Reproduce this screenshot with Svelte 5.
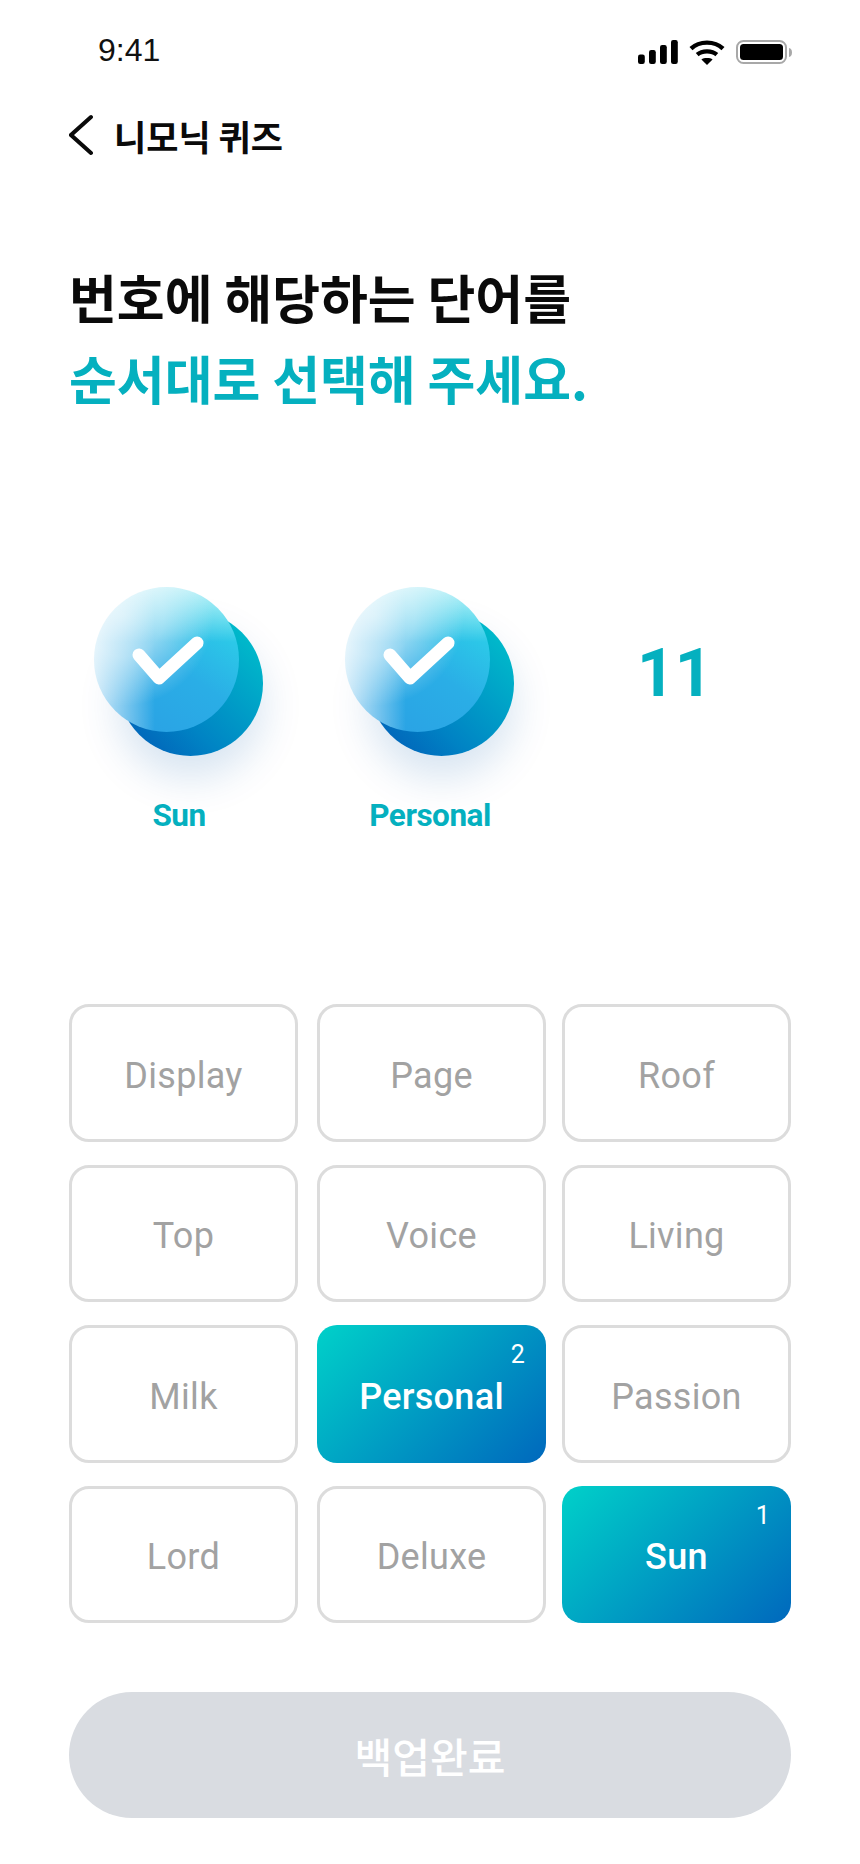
<script>
  const row = [
    { word: 'Sun' },
    { word: 'Personal' }
  ];
  const cards = [
    { w: 'Display' }, { w: 'Page' }, { w: 'Roof' },
    { w: 'Top' }, { w: 'Voice' }, { w: 'Living' },
    { w: 'Milk' }, { w: 'Personal', n: 2 }, { w: 'Passion' },
    { w: 'Lord' }, { w: 'Deluxe' }, { w: 'Sun', n: 1 }
  ];
</script>

<div class="page">
  <div class="status">
    <span class="time">9:41</span>
    <div class="icons">
      <svg width="40" height="24" viewBox="0 0 40 24">
        <rect x="0" y="14.6" width="6.8" height="9.4" rx="2.2" fill="#000"/>
        <rect x="11" y="10" width="6.8" height="14" rx="2.2" fill="#000"/>
        <rect x="22" y="5" width="6.8" height="19" rx="2.2" fill="#000"/>
        <rect x="33" y="0" width="6.8" height="24" rx="2.2" fill="#000"/>
      </svg>
      <svg width="36" height="26" viewBox="0 0 36 26">
        <path d="M2 9.6C10.5 1.6 25.5 1.6 34 9.6" fill="none" stroke="#000" stroke-width="4.4"/>
        <path d="M8.2 15.6C13 11.2 23 11.2 27.8 15.6" fill="none" stroke="#000" stroke-width="4.2"/>
        <path d="M12.4 20.4C15 18.6 21 18.6 23.6 20.4L18 26Z" fill="#000"/>
      </svg>
      <svg width="56" height="24" viewBox="0 0 56 24">
        <rect x="1" y="1" width="49" height="22" rx="6.5" fill="none" stroke="#a8a8a8" stroke-width="2"/>
        <rect x="4" y="4" width="43" height="16" rx="3.5" fill="#000"/>
        <path d="M53 8C55 8.6 56 10 56 12.5C56 15 55 16.4 53 17Z" fill="#a8a8a8"/>
      </svg>
    </div>
  </div>

  <header class="nav">
    <svg width="24" height="42" viewBox="0 0 24 42">
      <path d="M22 3L2 21L22 39" fill="none" stroke="#0a0a0a" stroke-width="4" stroke-linecap="round" stroke-linejoin="miter"/>
    </svg>
    <span>니모닉 퀴즈</span>
  </header>

  <h1>번호에 해당하는 단어를<br/><em>순서대로 선택해 주세요.</em></h1>

  <section class="slots">
    {#each row as s}
      <div class="slot">
        <div class="badge">
          <div class="back"></div>
          <div class="front"></div>
          <svg class="tick" width="76" height="56" viewBox="0 0 76 56">
            <path d="M9 22L29 45L67 10" fill="none" stroke="#fff" stroke-width="13" stroke-linecap="round" stroke-linejoin="round"/>
          </svg>
        </div>
        <span class="label">{s.word}</span>
      </div>
    {/each}
    <div class="num">11</div>
  </section>

  <section class="grid">
    {#each cards as c}
      <div class="card" class:on={c.n}>
        {c.w}
        {#if c.n}<span class="idx">{c.n}</span>{/if}
      </div>
    {/each}
  </section>

  <button class="done">백업완료</button>
</div>

<style>
  :global(body) {
    margin: 0;
    background: #fff;
  }
  .page {
    width: 860px;
    height: 1864px;
    box-sizing: border-box;
    padding: 0 69px;
    font-family: Roboto, "Noto Sans CJK KR", sans-serif;
    overflow: hidden;
  }
  .status {
    display: flex;
    justify-content: space-between;
    align-items: center;
    height: 100px;
    padding-left: 29px;
  }
  .time {
    font-family: "Liberation Sans", sans-serif;
    font-size: 32px;
    color: #111;
  }
  .icons {
    display: flex;
    align-items: center;
    gap: 11px;
    margin-right: -1px;
    margin-top: 4px;
  }
  .nav {
    display: flex;
    align-items: center;
    gap: 21px;
    height: 70px;
    font-family: "Noto Sans CJK KR", sans-serif;
    font-size: 35px;
    font-weight: 700;
    color: #0a0a0a;
  }
  h1 {
    margin: 86px 0 0;
    font-family: "Noto Sans CJK KR", sans-serif;
    font-size: 52px;
    font-weight: 700;
    line-height: 81px;
    color: #0a0a0a;
  }
  em {
    font-style: normal;
    color: #05b0bf;
  }
  .slots {
    display: flex;
    margin-top: 169px;
    height: 258px;
    padding-left: 25px;
  }
  .slot {
    width: 251px;
    display: flex;
    flex-direction: column;
  }
  .badge {
    position: relative;
    width: 169px;
    height: 169px;
  }
  .back {
    position: absolute;
    left: 24px;
    top: 24px;
    width: 145px;
    height: 145px;
    border-radius: 50%;
    background: linear-gradient(45deg, #0257b5 0%, #0083c4 35%, #00c8cc 100%);
    box-shadow: 0 22px 40px rgba(0, 90, 170, 0.16);
  }
  .front {
    position: absolute;
    left: 0;
    top: 0;
    width: 145px;
    height: 145px;
    border-radius: 50%;
    background: radial-gradient(circle at 20% 20%, rgba(255,255,255,0.6) 0%, rgba(255,255,255,0.45) 25%, rgba(255,255,255,0) 55%),
      linear-gradient(90deg, rgba(255,255,255,0.8) 0%, rgba(255,255,255,0) 42%),
      linear-gradient(180deg, rgba(255,255,255,0.7) 0%, rgba(255,255,255,0) 38%),
      linear-gradient(35deg, #2a9ee4 0%, #2aaee6 50%, #2ee0ea 100%);
  }
  .tick {
    position: absolute;
    left: 36px;
    top: 46px;
  }
  .label {
    margin-top: 41px;
    width: 170px;
    text-align: center;
    font-size: 31.5px;
    font-weight: 700;
    color: #05b0bf;
    letter-spacing: -0.5px;
    white-space: nowrap;
  }
  .num {
    margin-left: 41px;
    margin-top: 37px;
    font-size: 66px;
    font-weight: 700;
    line-height: 100px;
    color: #05b0bf;
  }
  .grid {
    display: grid;
    grid-template-columns: 248px 245px 229px;
    grid-auto-rows: 137.5px;
    row-gap: 23px;
    margin-top: 159px;
  }
  .card {
    position: relative;
    box-sizing: border-box;
    width: 229px;
    display: flex;
    align-items: center;
    justify-content: center;
    padding-top: 6px;
    border: 3px solid #dcdcdc;
    border-radius: 20px;
    font-size: 36px;
    color: #a2a2a2;
    letter-spacing: 0.3px;
  }
  .card.on {
    border: none;
    background: linear-gradient(135deg, #00d1c9 0%, #0068bd 100%);
    color: #fff;
    font-weight: 500;
  }
  .idx {
    position: absolute;
    right: 21px;
    top: 16px;
    font-size: 25px;
    font-weight: 400;
    line-height: 28px;
  }
  .done {
    display: block;
    width: 100%;
    height: 126px;
    margin-top: 69px;
    border: none;
    border-radius: 63px;
    background: #d9dce1;
    color: #fff;
    font-family: "Noto Sans CJK KR", sans-serif;
    font-size: 41px;
    font-weight: 500;
  }
</style>
